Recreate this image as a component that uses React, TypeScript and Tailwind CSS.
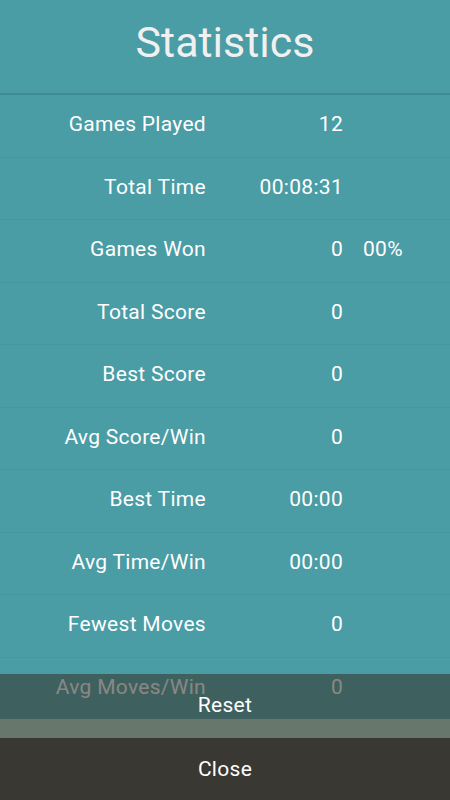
import React from "react";

const rows: [string, string, string?][] = [
  ["Games Played", "12"],
  ["Total Time", "00:08:31"],
  ["Games Won", "0", "00%"],
  ["Total Score", "0"],
  ["Best Score", "0"],
  ["Avg Score/Win", "0"],
  ["Best Time", "00:00"],
  ["Avg Time/Win", "00:00"],
  ["Fewest Moves", "0"],
  ["Avg Moves/Win", "0"],
];

export default function App() {
  return (
    <div
      className="w-[450px] h-[800px] flex flex-col bg-[#4a9ca5] text-white overflow-hidden"
      style={{ fontFamily: "Roboto, 'Noto Sans', sans-serif" }}
    >
      <div className="h-[95px] shrink-0 border-b-2 border-[#3f8c94] flex items-center justify-center pb-[8px]">
        <span className="text-[43px] leading-none text-[#f0f0f0]">Statistics</span>
      </div>
      <div className="relative flex-1 overflow-hidden">
        {rows.map(([label, value, pct], i) => (
          <div
            key={i}
            className="h-[62.5px] flex items-center border-b border-[#4695a0] text-[21px] leading-[24px] tracking-[0.3px] pb-[3px]"
          >
            <div className="w-[206px] text-right">{label}</div>
            <div className="w-[137px] text-right">{value}</div>
            {pct && <div className="ml-[20px]">{pct}</div>}
          </div>
        ))}
        <div className="absolute left-0 right-0 bottom-0 h-[45px] bg-[#373830]/60 flex items-end justify-center pb-[2px]">
          <span className="text-[21px] leading-[24px] tracking-[0.3px] text-white">Reset</span>
        </div>
      </div>
      <div className="h-[19px] shrink-0 bg-[#67776c]" />
      <div className="h-[62px] shrink-0 bg-[#393832] flex items-center justify-center">
        <span className="text-[21px] leading-[24px] tracking-[0.3px] text-white">Close</span>
      </div>
    </div>
  );
}
